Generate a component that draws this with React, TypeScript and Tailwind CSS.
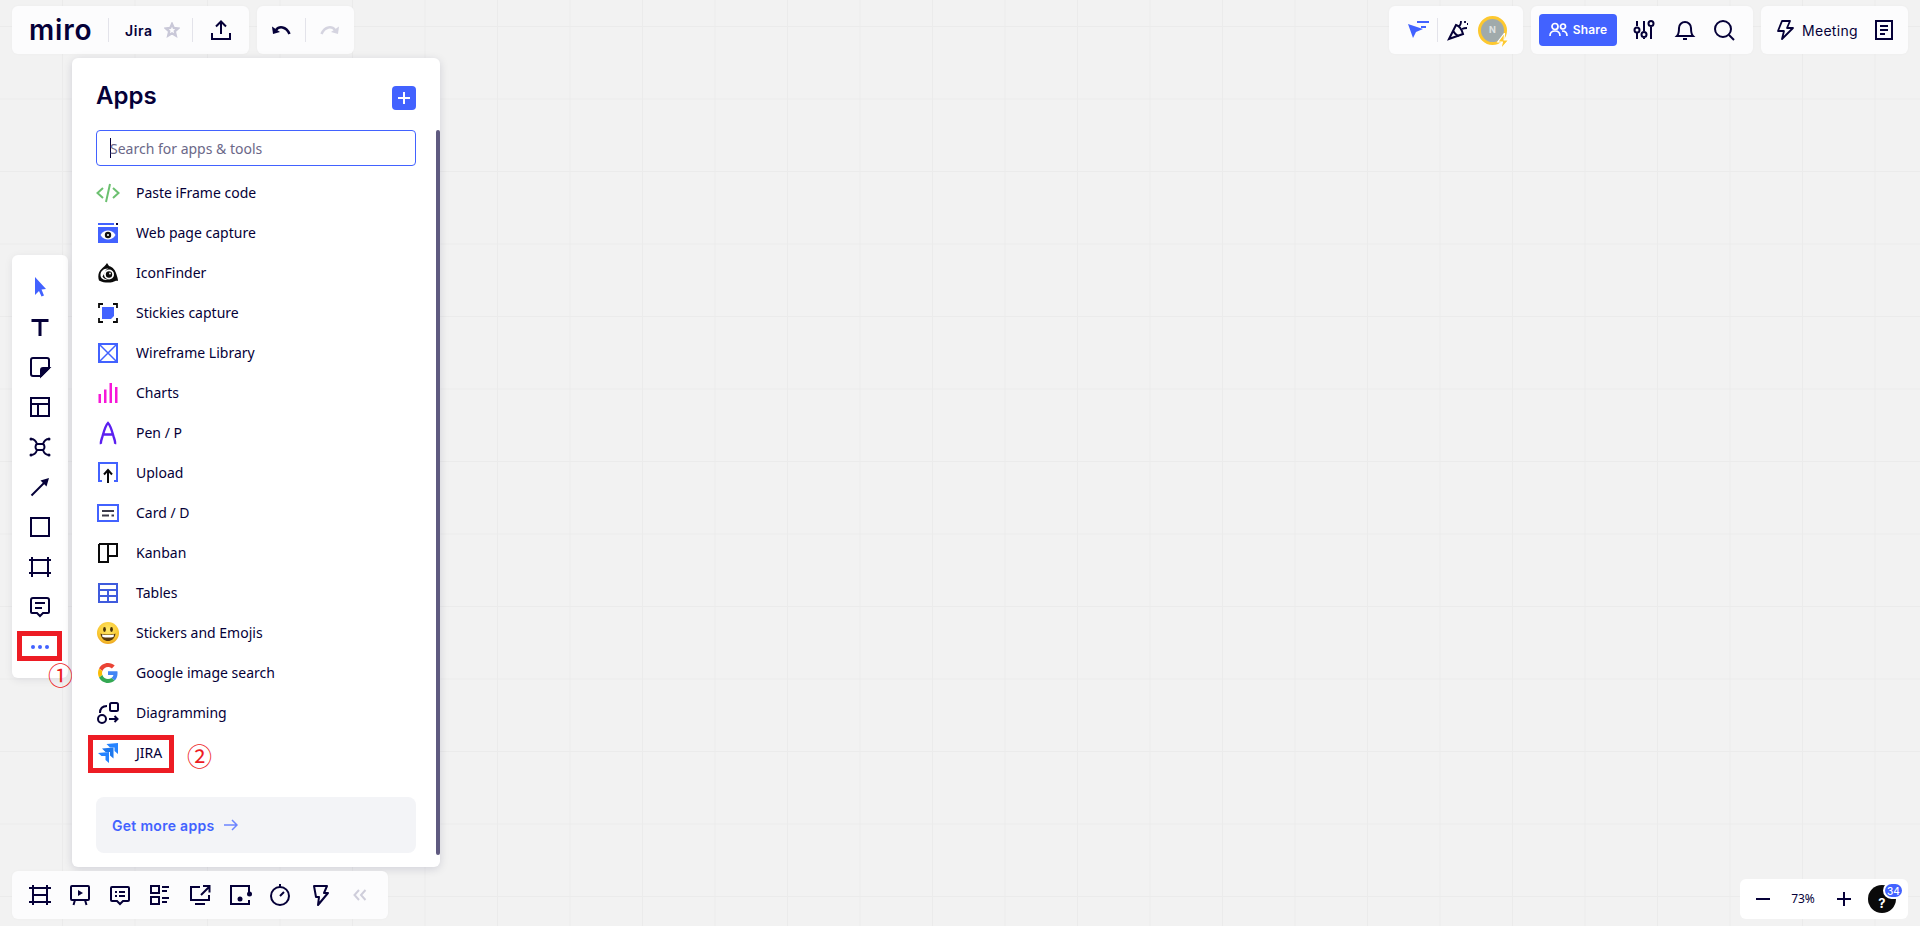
import type { ReactNode } from "react";

const INK = "#050038";
const BLUE = "#4262ff";

function Ico({ size = 24, children }: { size?: number; children: ReactNode }) {
  return (
    <svg width={size} height={size} viewBox="0 0 24 24" fill="none" stroke={INK} strokeWidth="2" className="shrink-0">
      {children}
    </svg>
  );
}

const apps: { name: string; icon: ReactNode }[] = [
  {
    name: "Paste iFrame code",
    icon: (
      <svg width="24" height="20" viewBox="0 0 24 20" fill="none" stroke="#6cc070" strokeWidth="2">
        <path d="M7 5l-5.500 5 5.500 5M17 5l5.500 5-5.500 5M14 1l-4 18" />
      </svg>
    ),
  },
  {
    name: "Web page capture",
    icon: (
      <svg width="20" height="20" viewBox="0 0 20 20">
        <rect x="0" y="0" width="16" height="2" fill={BLUE} />
        <rect x="18" y="0" width="2" height="2" fill="#050038" />
        <rect x="0" y="4" width="20" height="16" fill={BLUE} />
        <path d="M2.500 12c2-3.500 4.800-4.500 7.500-4.500s5.500 1 7.500 4.500c-2 3.500-4.800 4.500-7.500 4.500s-5.500-1-7.500-4.500z" fill="#fff" />
        <circle cx="10" cy="12" r="3.200" fill="#111" />
        <circle cx="10" cy="12" r="1" fill="#fff" />
      </svg>
    ),
  },
  {
    name: "IconFinder",
    icon: (
      <svg width="20" height="20" viewBox="0 0 20 20">
        <path d="M1 17.500C-.5 13 .5 8.500 3.500 6 5.500 4 7.500 2.500 9 0l2 3c4 1 6.500 4.500 7.500 8.500.5 2 1.500 4 1.500 6.500-2-.5-3.500.5-5 1-4 1-9 1-14-1.500z" fill="#0a0a0a" />
        <path d="M2.500 12c0-4 3.500-7 8-6.500-2.500 1-3 2-3 3l-3 5c1 2 3 3 6 3.500-4 .5-8-1-8-5z" fill="#fff" />
        <circle cx="11" cy="11.500" r="5" fill="#fff" />
        <circle cx="11" cy="11.500" r="3.200" fill="#0a0a0a" />
        <circle cx="12" cy="10.500" r="0.900" fill="#fff" />
      </svg>
    ),
  },
  {
    name: "Stickies capture",
    icon: (
      <svg width="20" height="20" viewBox="0 0 20 20">
        <path d="M1 5V1h4M15 1h4v4M19 15v4h-4M5 19H1v-4" fill="none" stroke="#0a0a0a" strokeWidth="1.800" />
        <path d="M4 4h12v9l-3 3H4z" fill={BLUE} />
      </svg>
    ),
  },
  {
    name: "Wireframe Library",
    icon: (
      <svg width="20" height="20" viewBox="0 0 20 20" fill="none" stroke={BLUE} strokeWidth="2">
        <rect x="1" y="1" width="18" height="18" />
        <path d="M2 2l16 16M18 2L2 18" strokeWidth="1.500" />
      </svg>
    ),
  },
  {
    name: "Charts",
    icon: (
      <svg width="20" height="20" viewBox="0 0 20 20" fill="#f716d8">
        <rect x="0.500" y="11" width="2.500" height="9" />
        <rect x="6" y="6.500" width="2.500" height="13.500" />
        <rect x="11.500" y="0" width="2.500" height="20" />
        <rect x="17" y="4" width="2.500" height="16" />
      </svg>
    ),
  },
  {
    name: "Pen / P",
    icon: (
      <svg width="20" height="24" viewBox="0 0 20 24" fill="none" stroke="#5b1ff0" strokeWidth="2.400">
        <path d="M3 23c-.5-1.500 0-3 1-6 1.500-5 3-12 6-15 3 3 4.500 10 6 15 1 3 1.500 4.500 1 6M6 13.500h8" />
      </svg>
    ),
  },
  {
    name: "Upload",
    icon: (
      <svg width="20" height="22" viewBox="0 0 20 22" fill="none">
        <path d="M4 19H1V1h18v18h-3" stroke={BLUE} strokeWidth="2" />
        <path d="M10 21V9M6 12.500L10 8l4 4.500" stroke="#0a0a0a" strokeWidth="2" />
      </svg>
    ),
  },
  {
    name: "Card / D",
    icon: (
      <svg width="22" height="18" viewBox="0 0 22 18" fill="none">
        <rect x="1" y="1" width="20" height="16" stroke={BLUE} strokeWidth="2" />
        <path d="M5 7h12M5 11.500h7" stroke="#3a3a4a" strokeWidth="2" />
        <rect x="14.500" y="10.500" width="2.500" height="2" fill="#3a3a4a" />
      </svg>
    ),
  },
  {
    name: "Kanban",
    icon: (
      <svg width="20" height="20" viewBox="0 0 20 20" fill="none" stroke="#0a0a0a" strokeWidth="2">
        <path d="M1 1h18v12h-9V1M1 1v18h9v-6" />
      </svg>
    ),
  },
  {
    name: "Tables",
    icon: (
      <svg width="20" height="20" viewBox="0 0 20 20" fill="none" stroke="#3f5bdd" strokeWidth="2">
        <rect x="1" y="1" width="18" height="18" />
        <path d="M1 7h18M1 13h18M10 7v12" />
      </svg>
    ),
  },
  {
    name: "Stickers and Emojis",
    icon: (
      <svg width="22" height="22" viewBox="0 0 22 22">
        <defs>
          <radialGradient id="face" cx="50%" cy="35%" r="70%">
            <stop offset="0%" stopColor="#ffe96a" />
            <stop offset="70%" stopColor="#f9c62f" />
            <stop offset="100%" stopColor="#e89a1d" />
          </radialGradient>
        </defs>
        <circle cx="11" cy="11" r="11" fill="url(#face)" />
        <ellipse cx="7.500" cy="7.500" rx="1.400" ry="2.400" fill="#4a3208" />
        <ellipse cx="14.500" cy="7.500" rx="1.400" ry="2.400" fill="#4a3208" />
        <path d="M3.500 11.500c2.500 1.300 12.500 1.300 15 0-.5 5-4 7.500-7.500 7.500s-7-2.500-7.500-7.500z" fill="#5a3a0c" />
        <path d="M5 12.500c3 .8 9 .8 12 0l-.5 2.500c-3 .8-8 .8-11 0z" fill="#fff" />
      </svg>
    ),
  },
  {
    name: "Google image search",
    icon: (
      <svg width="20" height="20" viewBox="0 0 48 48">
        <path fill="#ea4335" d="M24 9.500c3.500 0 6.700 1.200 9.200 3.600l6.900-6.900C35.900 2.400 30.500 0 24 0 14.600 0 6.500 5.400 2.600 13.200l8 6.200C12.500 13.700 17.800 9.500 24 9.500z" />
        <path fill="#4285f4" d="M46.900 24.500c0-1.600-.1-3.100-.4-4.500H24v9h12.900c-.6 3-2.200 5.400-4.700 7.100l7.700 6c4.500-4.200 7-10.300 7-17.600z" />
        <path fill="#fbbc05" d="M10.500 28.600c-.5-1.400-.8-3-.8-4.600s.3-3.200.8-4.600l-8-6.200C.9 16.500 0 20.100 0 24s.9 7.500 2.600 10.800z" />
        <path fill="#34a853" d="M24 48c6.500 0 11.900-2.100 15.900-5.800l-7.700-6c-2.200 1.500-5 2.300-8.200 2.300-6.200 0-11.500-4.200-13.400-9.900l-8 6.200C6.500 42.600 14.600 48 24 48z" />
      </svg>
    ),
  },
  {
    name: "Diagramming",
    icon: (
      <svg width="22" height="22" viewBox="0 0 22 22" fill="none" stroke={INK} strokeWidth="2">
        <rect x="13" y="1" width="8" height="8" rx="1.500" />
        <circle cx="5" cy="17" r="4" />
        <path d="M10 4C5 4 3 7 3 11M12 17h8M17.500 14l3 3-3 3" />
      </svg>
    ),
  },
  {
    name: "JIRA",
    icon: (
      <svg width="20" height="20" viewBox="0 0 20 20">
        <path d="M8.500 1L20 0v11l-3.500-3V4.500h-4.500z" fill="#2684ff" />
        <path d="M4 5.500L15.500 4.500v11L12 12.500V9H7.500z" fill="#1f78ec" />
        <path d="M0 10l11-1v11l-3.500-3v-4H3.500z" fill="#2684ff" />
      </svg>
    ),
  },
];

function Divider() {
  return <div className="h-[24px] w-px bg-[#e3e3ea]" />;
}

function Panel({ className, children }: { className: string; children: ReactNode }) {
  return (
    <div className={`absolute flex items-center rounded-md bg-[#fcfcfd] shadow-[0_0_3px_rgba(5,0,56,0.03)] ${className}`}>
      {children}
    </div>
  );
}

const tools: ReactNode[] = [
  <svg key="cursor" width="24" height="24" viewBox="0 0 24 24" fill={BLUE}>
    <path d="M7 2l11 12-4.500.5 2.500 6-2.500 1-2.500-5.500L7 20z" />
  </svg>,
  <Ico key="text">
    <path d="M3.500 5.500h17M12 5v16" strokeWidth="3" />
  </Ico>,
  <Ico key="note">
    <path d="M13 21H5a2 2 0 01-2-2V5a2 2 0 012-2h14a2 2 0 012 2v8z" />
    <path d="M13 21v-6a2 2 0 012-2h6z" fill={INK} />
  </Ico>,
  <Ico key="template">
    <rect x="3" y="3" width="18" height="18" />
    <path d="M3 9h18M10 9v12" />
  </Ico>,
  <Ico key="mindmap">
    <path d="M3 4c3 0 5 2 6 5M21 4c-3 0-5 2-6 5M3 20c3 0 5-2 6-5M21 20c-3 0-5-2-6-5M9 9h6c2 1 2 5 0 6H9c-2-1-2-5 0-6z" />
    <circle cx="3" cy="4" r="1.500" fill={INK} stroke="none" />
    <circle cx="21" cy="4" r="1.500" fill={INK} stroke="none" />
    <circle cx="3" cy="20" r="1.500" fill={INK} stroke="none" />
    <circle cx="21" cy="20" r="1.500" fill={INK} stroke="none" />
  </Ico>,
  <Ico key="arrow">
    <path d="M3.500 20.500L16 8" />
    <path d="M21 3l-8.500 2.500 6 6z" fill={INK} stroke="none" />
  </Ico>,
  <Ico key="shape">
    <rect x="3" y="3" width="18" height="18" />
  </Ico>,
  <Ico key="frame">
    <path d="M4 2v20M20 2v20M1 5h22M1 18h22" />
  </Ico>,
  <Ico key="comment">
    <path d="M5 3h14a2 2 0 012 2v12a1 1 0 01-1 1h-5l-3 3-3-3H4a1 1 0 01-1-1V5a2 2 0 012-2z" />
    <path d="M7 8h10M7 13h7" />
  </Ico>,
];

const bottomTools: ReactNode[] = [
  <Ico key="frames">
    <path d="M5 2v20M19 2v20M1 5h22M1 19h22M5 12h14" />
  </Ico>,
  <Ico key="present">
    <rect x="3" y="3" width="18" height="14" rx="1" />
    <path d="M7 17l-1.500 5M17 17l1.500 5" />
    <path d="M10 7l5 3-5 3z" fill={INK} stroke="none" />
  </Ico>,
  <Ico key="chat">
    <path d="M4 4h16a1 1 0 011 1v12a1 1 0 01-1 1h-5l-3 3-3-3H4a1 1 0 01-1-1V5a1 1 0 011-1z" />
    <path d="M7 9h2M11 9h6M7 13h2M11 13h6" />
  </Ico>,
  <Ico key="cards">
    <rect x="3" y="3" width="8" height="7" />
    <rect x="3" y="14" width="8" height="7" />
    <path d="M14 4h7M14 8h5M14 15h7M14 19h5" />
  </Ico>,
  <Ico key="share">
    <path d="M12 4H3v13h18v-5M7 21h10M13 12l8-8M15 3h6.500v6.500" />
  </Ico>,
  <Ico key="vote">
    <path d="M21 11V3H3v18h18v-4" />
    <circle cx="12" cy="16" r="2.500" fill={INK} stroke="none" />
    <circle cx="21.500" cy="11" r="2.500" fill={INK} stroke="none" />
  </Ico>,
  <Ico key="timer">
    <circle cx="12" cy="13" r="9" />
    <path d="M12 1v3M12 13l4-4" />
  </Ico>,
  <Ico key="bolt">
    <path d="M6 3h13l-3 7h4L10 22l1-8H8z" strokeLinejoin="round" />
  </Ico>,
];

function ToolBtn({ children }: { children: ReactNode }) {
  return <div className="flex h-[40px] w-[40px] items-center justify-center">{children}</div>;
}

export default function App() {
  return (
    <div className="relative h-[926px] w-full overflow-hidden bg-[#f2f2f2] bg-[linear-gradient(#ebebeb_1px,transparent_1px),linear-gradient(90deg,#ebebeb_1px,transparent_1px)] bg-[size:72.5px_72.5px] bg-[position:62px_26px] font-['Inter',sans-serif] text-[#050038]">
      {/* top left */}
      <Panel className="left-[12px] top-[6px] h-[48px] w-[237px]">
        <span className="ml-[17px] w-[79px] text-[28px] font-semibold leading-none tracking-[0.8px]">miro</span>
        <Divider />
        <span className="ml-[16px] w-[39px] text-[14px] font-semibold tracking-[0.6px]">Jira</span>
        <svg width="16" height="16" viewBox="0 0 24 24" fill="none" stroke="#c9c8d8" strokeWidth="3.500" className="mr-[12px]">
          <path d="M12 3l2.700 6 6.300.6-4.800 4.300 1.500 6.400L12 17l-5.700 3.300 1.500-6.400L3 9.600 9.300 9z" />
        </svg>
        <Divider />
        <div className="ml-[16px]">
          <Ico>
            <path d="M12 16V4M7 8.500L12 3.500l5 5M3 15v6h18v-6" />
          </Ico>
        </div>
      </Panel>
      <Panel className="left-[257px] top-[6px] h-[48px] w-[97px]">
        <div className="ml-[12px]">
          <Ico>
            <path d="M7 12c3-4 10-4 13.500 4" strokeWidth="2.500" />
            <path d="M3 8.500l1 7.500 7-2z" fill={INK} stroke="none" />
          </Ico>
        </div>
        <div className="ml-[12px]">
          <Divider />
        </div>
        <div className="ml-[12px]">
          <Ico>
            <path d="M17 12c-3-4-10-4-13.500 4" stroke="#d5d4e0" strokeWidth="2.500" />
            <path d="M21 8.500l-1 7.500-7-2z" fill="#d5d4e0" stroke="none" />
          </Ico>
        </div>
      </Panel>

      {/* top right */}
      <Panel className="left-[1389px] top-[6px] h-[48px] w-[134px]">
        <svg width="24" height="24" viewBox="0 0 24 24" className="ml-[17px]">
          <path d="M2 6l15 5-7 3-3 6z" fill={BLUE} />
          <path d="M11 4h12M15 9h5" stroke={BLUE} strokeWidth="2" />
        </svg>
        <div className="ml-[7px]">
          <Divider />
        </div>
        <div className="ml-[8px]">
          <Ico>
            <path d="M10 7L3 21l14-5c-1-4-4-8-7-9zM7 12c1 3 3 5 6 6" />
            <path d="M13 8c2-1 2-3 2-5M16 11c2-1 3-1 5-1M19 3v2M21 6h1" strokeWidth="1.800" />
          </Ico>
        </div>
        <div className="relative ml-[8px] flex h-[29px] w-[29px] items-center justify-center rounded-full border-[3px] border-[#fdc82f] bg-[#a0aaab] text-[9px] font-bold text-[#dfe3e3]">
          N
          <svg width="15" height="16" viewBox="0 0 14 15" className="absolute bottom-[-7px] right-[-7px]">
            <path d="M8 0L1.500 8.500H6L4.500 15 12 6.500H7.500z" fill="#fdc82f" stroke="#fff" strokeWidth="1" />
          </svg>
        </div>
      </Panel>
      <Panel className="left-[1531px] top-[6px] h-[48px] w-[222px]">
        <div className="ml-[8px] flex h-[32px] w-[78px] items-center justify-center gap-[5px] rounded bg-[#4262ff] text-[12px] font-semibold tracking-[0.2px] text-white">
          <svg width="19" height="16" viewBox="0 0 19 16" fill="none" stroke="#fff" strokeWidth="1.700">
            <circle cx="6" cy="4.500" r="3" />
            <circle cx="14" cy="4.500" r="2.500" />
            <path d="M1 14c0-3.500 2-5 5-5s5 1.500 5 5M13 9c3 0 5 1.500 5 5" />
          </svg>
          Share
        </div>
        <div className="ml-[15px]">
          <Ico>
            <path d="M5 3v5M5 15v6M12 3v10M12 20v1M19 9v12" />
            <circle cx="5" cy="12" r="2.500" fill="#fff" />
            <circle cx="12" cy="16.500" r="2.500" fill="#fff" />
            <circle cx="19" cy="5.500" r="2.500" fill="#fff" />
          </Ico>
        </div>
        <div className="ml-[17px]">
          <Ico>
            <path d="M4 18c2-2 2-4 2-8a6 6 0 0112 0c0 4 0 6 2 8zM10 21h4" />
          </Ico>
        </div>
        <div className="ml-[15px]">
          <Ico>
            <circle cx="11" cy="11" r="8" />
            <path d="M17 17l5 5" />
          </Ico>
        </div>
      </Panel>
      <Panel className="left-[1761px] top-[6px] h-[48px] w-[147px]">
        <div className="ml-[12px]">
          <Ico>
            <path d="M9 3h8l-3 7h6L9 21l2-8H5z" strokeLinejoin="round" strokeWidth="1.800" />
          </Ico>
        </div>
        <span className="ml-[5px] w-[57px] text-[14px] font-normal tracking-[0.3px]">Meeting</span>
        <div className="ml-[13px]">
          <Ico>
            <rect x="4" y="3" width="16" height="18" />
            <path d="M8 8h8M8 12h8M8 16h5" />
          </Ico>
        </div>
      </Panel>

      {/* left toolbar */}
      <div className="absolute left-[12px] top-[255px] flex h-[423px] w-[56px] flex-col items-center rounded-md bg-white pt-[12px] shadow-[0_2px_8px_rgba(5,0,56,0.08)]">
        {tools.map((t, i) => (
          <ToolBtn key={i}>{t}</ToolBtn>
        ))}
        <div className="flex h-[40px] items-center gap-[3px]">
          <span className="h-[4px] w-[4px] rounded-full bg-[#4262ff]" />
          <span className="h-[4px] w-[4px] rounded-full bg-[#4262ff]" />
          <span className="h-[4px] w-[4px] rounded-full bg-[#4262ff]" />
        </div>
      </div>
      <div className="absolute left-[17px] top-[631px] h-[30px] w-[45px] border-[5px] border-[#ed1c24]" />
      <span className="absolute left-[48px] top-[659px] font-['Noto_Sans_CJK_JP',sans-serif] text-[25px] leading-[30px] text-[#ed1c24]">①</span>

      {/* apps panel */}
      <div className="absolute left-[72px] top-[58px] flex h-[809px] w-[368px] flex-col rounded-md bg-white px-[24px] shadow-[0_2px_10px_rgba(5,0,56,0.14)]">
        <div className="mt-[26px] flex h-[24px] items-center justify-between">
          <span className="text-[24px] font-semibold leading-none">Apps</span>
          <div className="mt-[4px] flex h-[24px] w-[24px] items-center justify-center rounded bg-[#4262ff]">
            <svg width="14" height="14" viewBox="0 0 14 14" stroke="#fff" strokeWidth="2">
              <path d="M7 1v12M1 7h12" />
            </svg>
          </div>
        </div>
        <div className="mt-[22px] flex h-[36px] shrink-0 items-center rounded border border-[#4262ff] pl-[13px] font-['Noto_Sans',sans-serif] text-[14px] text-[#6b6888]">
          <span className="h-[20px] w-px bg-[#050038]" />
          <span className="-ml-px">Search for apps &amp; tools</span>
        </div>
        <div className="mt-[8px] flex flex-col font-['Noto_Sans',sans-serif] text-[14px] leading-[18px]">
          {apps.map((a) => (
            <div key={a.name} className="flex h-[40px] items-center pb-[2px]">
              <div className="flex w-[24px] items-center justify-center">{a.icon}</div>
              <span className="ml-[16px]">{a.name}</span>
            </div>
          ))}
        </div>
        <div className="mt-[23px] flex h-[56px] items-center gap-[9px] rounded-lg bg-[#f3f4f7] pl-[16px] text-[14px] font-semibold tracking-[0.3px] text-[#4262ff]">
          Get more apps
          <svg width="14" height="12" viewBox="0 0 14 12" fill="none" stroke="#6c84ff" strokeWidth="1.500">
            <path d="M0 6h13M8 1l5 5-5 5" />
          </svg>
        </div>
        <div className="absolute right-0 top-[72px] h-[725px] w-[4px] rounded-full bg-[#5f5a80]" />
      </div>
      <div className="absolute left-[88px] top-[735px] h-[38px] w-[86px] border-[5px] border-[#ed1c24]" />
      <span className="absolute left-[187px] top-[740px] font-['Noto_Sans_CJK_JP',sans-serif] text-[25px] leading-[30px] text-[#ed1c24]">②</span>

      {/* bottom left */}
      <div className="absolute left-[12px] top-[871px] flex h-[48px] w-[376px] items-center rounded-md bg-[#fcfcfd] pl-[8px] shadow-[0_0_3px_rgba(5,0,56,0.03)]">
        {bottomTools.map((t, i) => (
          <ToolBtn key={i}>{t}</ToolBtn>
        ))}
        <svg width="14" height="12" viewBox="0 0 14 12" fill="none" stroke="#cfcedb" strokeWidth="2" className="ml-[13px]">
          <path d="M6 1L1.500 6 6 11M12.500 1L8 6l4.500 5" />
        </svg>
      </div>

      {/* bottom right */}
      <div className="absolute left-[1740px] top-[879px] flex h-[40px] w-[168px] items-center rounded-md bg-white">
        <svg width="16" height="16" viewBox="0 0 16 16" stroke={INK} strokeWidth="2" className="ml-[15px]">
          <path d="M1 8h14" />
        </svg>
        <span className="ml-[18px] w-[28px] text-center font-['Noto_Sans',sans-serif] text-[12px]">73%</span>
        <svg width="16" height="16" viewBox="0 0 16 16" stroke={INK} strokeWidth="2" className="ml-[19px]">
          <path d="M1 8h14M8 1v14" />
        </svg>
        <div className="relative ml-[16px] flex h-[28px] w-[28px] items-end justify-center rounded-full bg-[#0a0a0a] text-[13px] font-bold leading-[20px] text-white">
          ?
          <span className="absolute right-[-8px] top-[-3px] flex h-[17px] w-[21px] items-center justify-center rounded-full border-2 border-white bg-[#4262ff] text-[10px] font-medium">
            34
          </span>
        </div>
      </div>
    </div>
  );
}
